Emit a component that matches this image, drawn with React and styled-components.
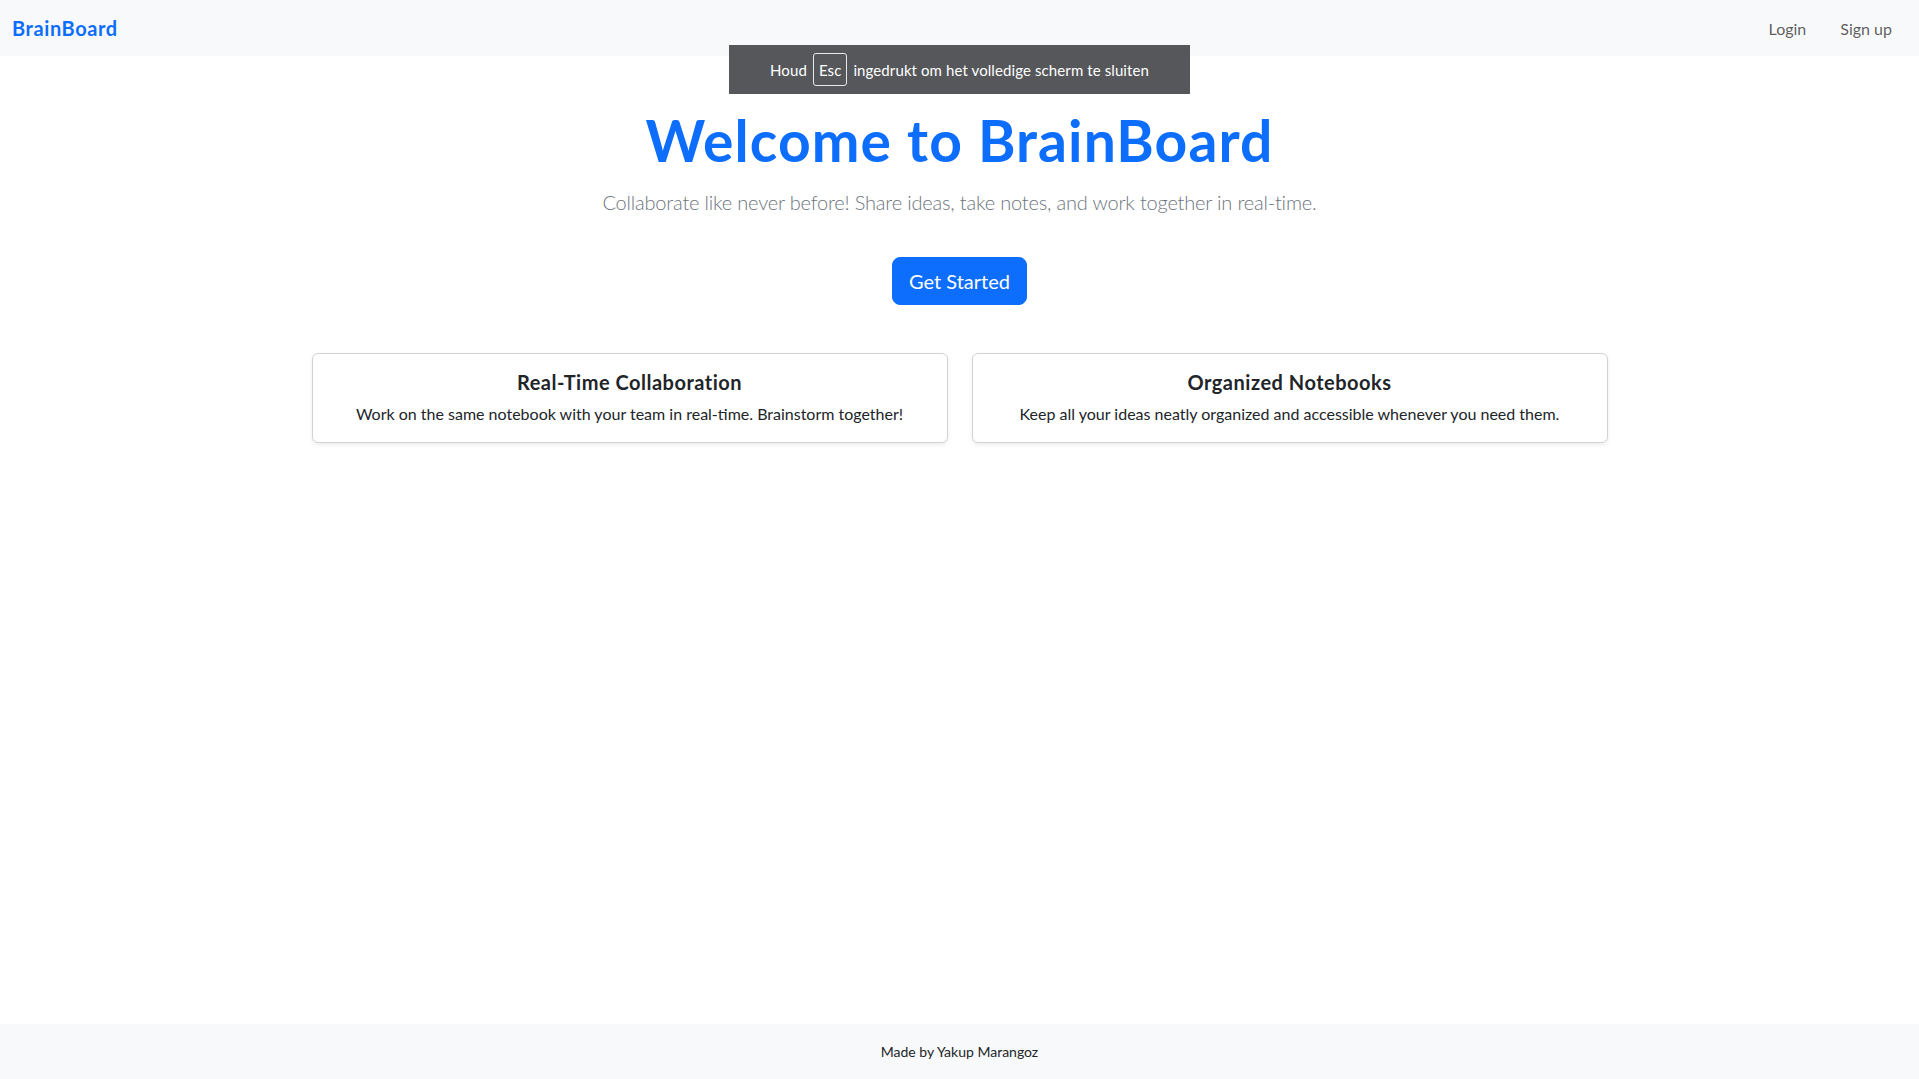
import React from "react";
import styled, { createGlobalStyle } from "styled-components";

const GlobalStyle = createGlobalStyle`
    * { box-sizing: border-box; }
    body {
        margin: 0;
        font-family: Lato, "Noto Sans", "Liberation Sans", sans-serif;
        color: #212529;
        background: #fff;
    }
`;

const features = [
    {
        title: "Real-Time Collaboration",
        text: "Work on the same notebook with your team in real-time. Brainstorm together!",
    },
    {
        title: "Organized Notebooks",
        text: "Keep all your ideas neatly organized and accessible whenever you need them.",
    },
];

const App = () => {
    return (
        <Page>
            <GlobalStyle />
            <NavBar>
                <Brand href="#">BrainBoard</Brand>
                <NavLinks>
                    <NavLink href="#">Login</NavLink>
                    <NavLink href="#">Sign up</NavLink>
                </NavLinks>
            </NavBar>

            <FullscreenBubble>
                Houd <Key>Esc</Key> ingedrukt om het volledige scherm te sluiten
            </FullscreenBubble>

            <Main>
                <Title>Welcome to BrainBoard</Title>
                <Lead>Collaborate like never before! Share ideas, take notes, and work together in real-time.</Lead>
                <PrimaryButton>Get Started</PrimaryButton>
                <Cards>
                    {features.map((f) => (
                        <Card key={f.title}>
                            <CardTitle>{f.title}</CardTitle>
                            <CardText>{f.text}</CardText>
                        </Card>
                    ))}
                </Cards>
            </Main>

            <Footer>Made by Yakup Marangoz</Footer>
        </Page>
    );
};

export default App;

const Page = styled.div`
    min-height: 100vh;
    display: flex;
    flex-direction: column;
    position: relative;
`;

const NavBar = styled.nav`
    height: 56px;
    background: #f8f9fa;
    display: flex;
    align-items: center;
    justify-content: space-between;
    padding: 0 19px 0 12px;
`;

const Brand = styled.a`
    font-size: 20px;
    font-weight: 700;
    letter-spacing: 0.6px;
    color: #0d6efd;
    text-decoration: none;
`;

const NavLinks = styled.div`
    display: flex;
    gap: 18px;
`;

const NavLink = styled.a`
    font-size: 16px;
    color: rgba(0, 0, 0, 0.65);
    text-decoration: none;
    padding: 8px;
`;

const FullscreenBubble = styled.div`
    position: absolute;
    top: 45px;
    left: 729px;
    width: 461px;
    height: 49px;
    background: #55575b;
    color: #fff;
    font-size: 15px;
    letter-spacing: 0.1px;
    display: flex;
    align-items: center;
    justify-content: center;
    gap: 6px;
`;

const Key = styled.span`
    border: 1px solid #e8e8e8;
    border-radius: 3px;
    height: 33px;
    padding: 0 5px;
    display: flex;
    align-items: center;
`;

const Main = styled.main`
    flex: 1;
    display: flex;
    flex-direction: column;
    align-items: center;
    padding-top: 51px;
`;

const Title = styled.h1`
    margin: 0;
    font-size: 57px;
    line-height: 67px;
    font-weight: 700;
    letter-spacing: 1.1px;
    color: #0d6efd;
`;

const Lead = styled.p`
    margin: 13px 0 0;
    font-size: 20px;
    line-height: 30px;
    font-weight: 300;
    letter-spacing: -0.18px;
    color: #6c757d;
`;

const PrimaryButton = styled.button`
    margin-top: 40px;
    height: 48px;
    padding: 0 16px;
    font-family: inherit;
    font-size: 20px;
    color: #fff;
    background: #0d6efd;
    border: 1px solid #0d6efd;
    border-radius: 8px;
`;

const Cards = styled.div`
    margin-top: 48px;
    width: 1296px;
    display: grid;
    grid-template-columns: 1fr 1fr;
    gap: 24px;
`;

const Card = styled.div`
    border: 1px solid rgba(0, 0, 0, 0.175);
    border-radius: 6px;
    box-shadow: 0 2px 4px rgba(0, 0, 0, 0.075);
    padding: 16px;
    text-align: center;
`;

const CardTitle = styled.h5`
    margin: 0 0 8px;
    font-size: 20px;
    line-height: 24px;
    font-weight: 700;
    letter-spacing: 0.5px;
`;

const CardText = styled.p`
    margin: 0;
    font-size: 16px;
    line-height: 24px;
`;

const Footer = styled.footer`
    height: 55px;
    background: #f8f9fa;
    display: flex;
    align-items: center;
    justify-content: center;
    font-size: 14px;
`;
